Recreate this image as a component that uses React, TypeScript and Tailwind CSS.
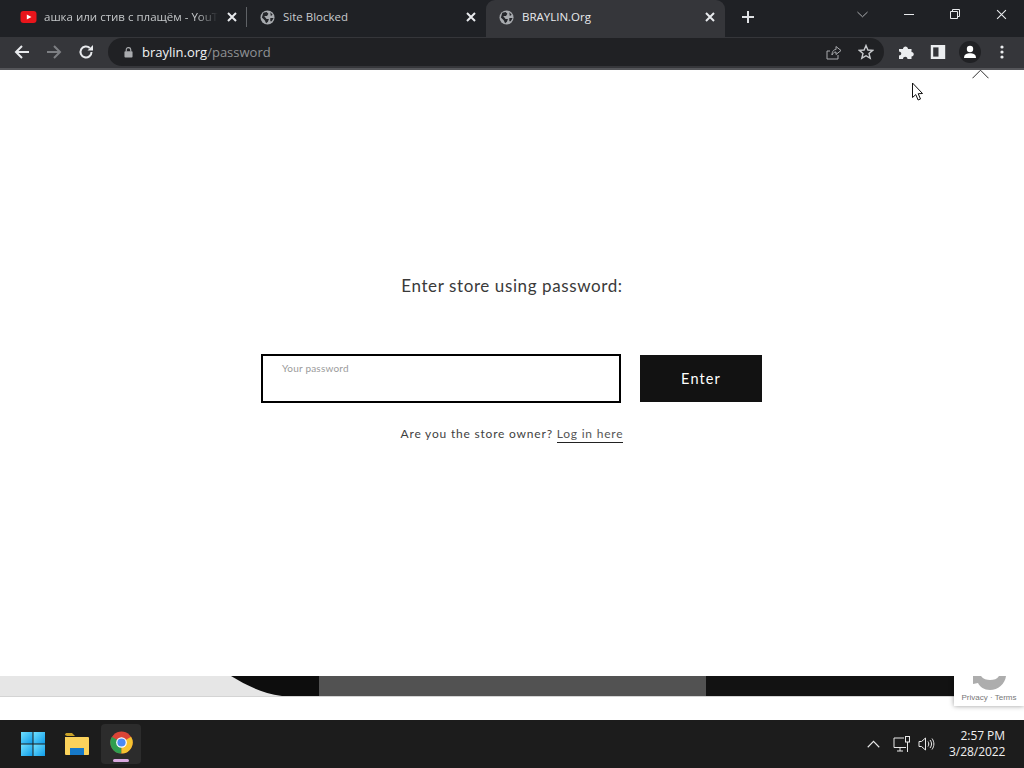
import React from "react";

const Globe = () => (
  <svg viewBox="0 0 16 16" className="w-[15px] h-[15px] shrink-0">
    <circle cx="8" cy="8" r="7.5" fill="#a8abaf" />
    <path d="M3.5 3 L7 2 L9 4 L7.5 6.5 L4.5 6.5 L7 9.5 L9.5 9.5 L8.5 12.5 L6.5 14 L5 11 L2 8 Z M11 2.5 L13.5 5 L11.5 6.5 Z M11 8.5 L14.5 8.5 L12.5 12 L11 12 Z" fill="#25272b" />
  </svg>
);

const Close = ({ size = 10, stroke = "#e8eaed", w = 2 }: { size?: number; stroke?: string; w?: number }) => (
  <svg viewBox="0 0 10 10" width={size} height={size} className="shrink-0">
    <path d="M1 1 L9 9 M9 1 L1 9" stroke={stroke} strokeWidth={w} fill="none" />
  </svg>
);

function Tabs() {
  return (
    <div className="h-[37px] bg-[#1f2125] flex items-stretch relative shrink-0 font-['Open_Sans',sans-serif] text-[11.5px] text-[#c4c7c9]">
      <div className="w-[247px] flex items-center pl-[20px] pr-[10px] pb-[3px] relative">
        <svg viewBox="0 0 16 12" className="w-[17px] h-[12px] shrink-0">
          <rect width="16" height="12" rx="3" fill="#e8151b" />
          <path d="M6.3 3.4 L11 6 L6.3 8.6 Z" fill="#fff" />
        </svg>
        <span className="ml-[7px] w-[174px] whitespace-nowrap [mask-image:linear-gradient(to_right,#000_88%,transparent_100%)]">ашка или стив с плащём - YouT</span>
        <span className="ml-auto"><Close /></span>
        <span className="absolute right-0 top-[7px] h-[20px] w-px bg-[#5f6266]" />
      </div>
      <div className="w-[239px] flex items-center pl-[13px] pr-[10px] pb-[3px]">
        <Globe />
        <span className="ml-[8px] whitespace-nowrap text-[#c9cbce]">Site Blocked</span>
        <span className="ml-auto"><Close /></span>
      </div>
      <div className="w-[239px] flex items-center pl-[13px] pr-[10px] pb-[3px] bg-[#35363a] rounded-t-[9px] text-[#e8eaed]">
        <Globe />
        <span className="ml-[8px] whitespace-nowrap">BRAYLIN.Org</span>
        <span className="ml-auto"><Close /></span>
      </div>
      <div className="ml-[16px] flex items-center pb-[3px]">
        <svg viewBox="0 0 14 14" className="w-[14px] h-[14px]">
          <path d="M7 1 V13 M1 7 H13" stroke="#dfe1e4" strokeWidth="2" fill="none" />
        </svg>
      </div>
      <div className="ml-auto flex items-start text-[#e8eaed]">
        <span className="w-[46px] h-[28px] pr-[2px] flex items-center justify-center">
          <svg viewBox="0 0 12 7" className="w-[11px] h-[7px]"><path d="M0.5 0.8 L6 6 L11.5 0.8" stroke="#b8babd" strokeWidth="1" fill="none" /></svg>
        </span>
        <span className="w-[46px] h-[28px] flex items-center justify-center">
          <span className="w-[10px] h-px bg-[#e8eaed]" />
        </span>
        <span className="w-[46px] h-[28px] flex items-center justify-center">
          <svg viewBox="0 0 10 10" className="w-[10px] h-[10px]">
            <path d="M2.5 2.5 V0.5 H9.5 V7.5 H7.5 M0.5 2.5 H7.5 V9.5 H0.5 Z" stroke="#e8eaed" strokeWidth="1" fill="none" />
          </svg>
        </span>
        <span className="w-[46px] h-[28px] flex items-center justify-center">
          <Close size={11} w={1} />
        </span>
      </div>
    </div>
  );
}

function Toolbar() {
  return (
    <div className="h-[33px] bg-[#35363a] border-b-[2px] border-[#55565a] pt-[1px] flex items-start shrink-0 font-['Open_Sans',sans-serif] relative">
      <div className="w-[108px] h-[28px] flex items-center shrink-0 pl-[14px] gap-[16px]">
        <svg viewBox="0 0 16 16" className="w-[16px] h-[16px]"><path d="M15 8 H2 M8 2 L2 8 L8 14" stroke="#e8eaed" strokeWidth="2" fill="none" /></svg>
        <svg viewBox="0 0 16 16" className="w-[16px] h-[16px]"><path d="M1 8 H14 M8 2 L14 8 L8 14" stroke="#7d7f83" strokeWidth="2" fill="none" /></svg>
        <svg viewBox="0 0 16 16" className="w-[16px] h-[16px]">
          <path d="M13.5 8 A5.5 5.5 0 1 1 11.8 4" stroke="#e8eaed" strokeWidth="2" fill="none" />
          <path d="M9.5 6.5 H15 V1 Z" fill="#e8eaed" />
        </svg>
      </div>
      <div className="w-[776px] h-[28px] bg-[#202124] rounded-full flex items-center pl-[16px] pr-[10px] shrink-0">
        <svg viewBox="0 0 10 12" className="w-[9px] h-[11px] shrink-0">
          <rect x="0.5" y="4.5" width="9" height="7" rx="1" fill="#a9abae" />
          <path d="M2.5 5 V3 A2.5 2.5 0 0 1 7.5 3 V5" stroke="#a9abae" strokeWidth="1.3" fill="none" />
        </svg>
        <span className="ml-[9px] mt-[1px] text-[13px] text-[#f1f3f4] whitespace-nowrap">
          braylin.org<span className="text-[#8f9194]">/password</span>
        </span>
        <div className="ml-auto flex items-center gap-[16px]">
          <svg viewBox="0 0 16 16" className="w-[16px] h-[16px]">
            <path d="M1 7 V15 H12 V11 M1 7 H4 M6 11 C6 7 8 5.5 10 5.5 V2.5 L15 6.5 L10 10.5 V8 C8 8 7 9 6 11 Z" stroke="#a9abae" strokeWidth="1" fill="none" />
          </svg>
          <svg viewBox="0 0 16 16" className="w-[16px] h-[16px]">
            <path d="M8 1.5 L9.9 6 L14.7 6.4 L11 9.5 L12.2 14.2 L8 11.7 L3.8 14.2 L5 9.5 L1.3 6.4 L6.1 6 Z" stroke="#c9cbce" strokeWidth="1.4" fill="none" />
          </svg>
        </div>
      </div>
      <div className="h-[28px] flex items-center pl-[14px] gap-[16px]">
        <svg viewBox="0 0 16 16" className="w-[16px] h-[16px]">
          <path d="M1 5 H5 C5 1.5 10 1.5 10 5 H13.5 V8 C16.5 8 16.5 12.5 13.5 12.5 V15 H9.5 C9.5 12 5 12 5 15 H1 V11.5 C4 11.5 4 7.5 1 7.5 Z" fill="#eceef0" />
        </svg>
        <svg viewBox="0 0 16 16" className="w-[16px] h-[16px]">
          <rect x="2" y="2.2" width="12" height="11.6" stroke="#eceef0" strokeWidth="2.4" fill="none" />
          <rect x="8.5" y="1" width="6.5" height="14" fill="#eceef0" />
        </svg>
        <span className="w-[22px] h-[22px] -mx-[3px] rounded-full bg-[#202124] flex items-center justify-center">
          <svg viewBox="0 0 14 14" className="w-[14px] h-[14px]">
            <circle cx="7" cy="4" r="3.2" fill="#fff" />
            <path d="M1 13 C1 9 4 8.2 7 8.2 C10 8.2 13 9 13 13 Z" fill="#fff" />
          </svg>
        </span>
        <svg viewBox="0 0 4 16" className="w-[4px] h-[16px] ml-[6px]">
          <circle cx="2" cy="3" r="1.6" fill="#eceef0" />
          <circle cx="2" cy="8" r="1.6" fill="#eceef0" />
          <circle cx="2" cy="13" r="1.6" fill="#eceef0" />
        </svg>
      </div>
    </div>
  );
}

function Page() {
  return (
    <div className="flex-1 bg-white flex flex-col relative overflow-hidden font-['Lato',sans-serif]">
      <svg viewBox="0 0 18 10" className="absolute left-[972px] top-[-1px] w-[17px] h-[10px]">
        <path d="M0.5 9.5 L9 1 L17.5 9.5" stroke="#222" strokeWidth="1" fill="none" />
      </svg>
      <svg viewBox="0 0 12 20" className="absolute left-[911px] top-[12px] w-[13px] h-[20px]">
        <path d="M1 1 V15.5 L4.3 12.6 L6.6 18 L9 17 L6.7 11.7 L11 11.5 Z" fill="#fff" stroke="#111" strokeWidth="1" />
      </svg>

      <div className="h-[606px] flex flex-col items-center shrink-0 pt-[204px]">
        <h1 className="text-[17px] leading-[24px] tracking-[0.6px] text-[#3a3a3a] font-normal">Enter store using password:</h1>
        <div className="mt-[56px] mr-[1px] flex items-center gap-[19px]">
          <div className="w-[360px] h-[49px] border-[2px] border-black pl-[19px] pt-[5px]">
            <span className="block text-[10px] leading-[14px] tracking-[0.2px] text-[#9b9b9b]">Your password</span>
          </div>
          <button className="w-[122px] h-[47px] bg-[#121212] text-white text-[14.5px] tracking-[1.1px]">Enter</button>
        </div>
        <p className="mt-[22px] text-[12px] leading-[18px] tracking-[0.8px] text-[#3f3f3f]">
          Are you the store owner?{" "}
          <span className="border-b border-[#222] pb-[1px] text-[#555]">Log in here</span>
        </p>
      </div>

      <div className="h-[20px] flex shrink-0">
        <div className="w-[319px] bg-[#e6e6e6] relative overflow-hidden">
          <svg viewBox="0 0 90 20" className="absolute right-0 top-0 w-[90px] h-[20px]">
            <path d="M2 0 C17 9 32 17 53 20 H90 V0 Z" fill="#0d0d0d" />
          </svg>
        </div>
        <div className="w-[387px] bg-[#525252]" />
        <div className="flex-1 bg-[#121212]" />
      </div>
      <div className="flex-1 border-t border-[#d4d4d4]" />

      <div className="absolute left-[954px] top-[606px] w-[70px] h-[30px] bg-white shadow-[0_0_5px_rgba(0,0,0,0.4)] [clip-path:inset(0_-8px_-8px_-8px)] flex flex-col items-center overflow-visible">
        <svg viewBox="0 0 33 14" className="w-[33px] h-[14px] shrink-0">
          <path d="M0 0 H8 C10 3 14 4 17 4 C21 4 24 3 26 0 H33 C32 8 25 14 17 14 C11 14 7 11 5 7 L0 8 Z" fill="#adadad" />
        </svg>
        <span className="mt-[3px] text-[8px] leading-[10px] text-[#777] font-['Liberation_Sans',sans-serif] whitespace-nowrap">Privacy · Terms</span>
      </div>
    </div>
  );
}

function Taskbar() {
  return (
    <div className="h-[48px] bg-[#1c1c1c] flex items-center shrink-0 relative font-['Open_Sans',sans-serif]">
      <div className="flex items-center pl-[21px]">
        <svg viewBox="0 0 24 24" className="w-[24px] h-[24px]">
          <defs>
            <linearGradient id="w" x1="0" y1="0" x2="1" y2="1">
              <stop offset="0" stopColor="#6fe0ff" />
              <stop offset="1" stopColor="#0f9be8" />
            </linearGradient>
          </defs>
          <rect x="0" y="0" width="11.5" height="11.5" fill="url(#w)" />
          <rect x="12.5" y="0" width="11.5" height="11.5" fill="url(#w)" />
          <rect x="0" y="12.5" width="11.5" height="11.5" fill="url(#w)" />
          <rect x="12.5" y="12.5" width="11.5" height="11.5" fill="url(#w)" />
        </svg>
        <svg viewBox="0 0 26 24" className="w-[26px] h-[24px] ml-[19px]">
          <path d="M1 3 C1 1.5 2 1 3 1 H8 L11 4 H3 Z" fill="#c9a227" />
          <path d="M1 5 H24 C25 5 25 6 25 6 V22 C25 23 24 23 24 23 H2 C1 23 1 22 1 22 Z" fill="#fbd25b" />
          <path d="M6 23 V16 H20 V23 Z" fill="#1679c9" />
        </svg>
        <div className="w-[40px] h-[40px] ml-[11px] bg-[#2c2c2c] rounded-[4px] relative flex items-center justify-center">
          <svg viewBox="0 0 24 24" className="w-[23px] h-[23px] -mt-[3px]">
            <circle cx="12" cy="12" r="11.5" fill="#db4437" />
            <path d="M12 12 L2 6 A11.5 11.5 0 0 0 12 23.5 Z" fill="#2f9e4f" />
            <path d="M12 12 L22 6 A11.5 11.5 0 0 1 12 23.5 Z" fill="#f5c330" />
            <circle cx="12" cy="12" r="5.6" fill="#fff" />
            <circle cx="12" cy="12" r="4.3" fill="#4a8af4" />
          </svg>
          <span className="absolute bottom-[2px] left-[12px] w-[16px] h-[3px] rounded-full bg-[#d9a9e0]" />
        </div>
      </div>
      <div className="ml-auto flex items-center pr-[19px]">
        <svg viewBox="0 0 14 8" className="w-[13px] h-[8px]"><path d="M0.8 7.5 L7 1.2 L13.2 7.5" stroke="#e8e8e8" strokeWidth="1.2" fill="none" /></svg>
        <svg viewBox="0 0 18 17" className="w-[18px] h-[17px] ml-[13px]">
          <path d="M11 2 H1 V11.5 H13 M4 15 H10 M7 12 V15" stroke="#e8e8e8" strokeWidth="1" fill="none" />
          <rect x="12.5" y="0.5" width="4" height="5.5" stroke="#e8e8e8" strokeWidth="1" fill="none" />
          <path d="M14.5 6 V16" stroke="#e8e8e8" strokeWidth="1" />
        </svg>
        <svg viewBox="0 0 17 14" className="w-[17px] h-[14px] ml-[7px]">
          <path d="M1 4.5 H3.5 L7.5 1 V13 L3.5 9.5 H1 Z M10 4.5 C11 6 11 8 10 9.5 M12 3 C14 5.5 14 8.5 12 11 M14 1.5 C16.5 5 16.5 9 14 12.5" stroke="#e8e8e8" strokeWidth="1" fill="none" />
        </svg>
        <div className="ml-[14px] w-[56px] text-right text-[12px] leading-[16px] text-[#f0f0f0] whitespace-nowrap tracking-[-0.05px]">
          <div>2:57 PM</div>
          <div>3/28/2022</div>
        </div>
      </div>
    </div>
  );
}

export default function App() {
  return (
    <div className="w-[1024px] h-[768px] flex flex-col overflow-hidden">
      <Tabs />
      <Toolbar />
      <Page />
      <Taskbar />
    </div>
  );
}
